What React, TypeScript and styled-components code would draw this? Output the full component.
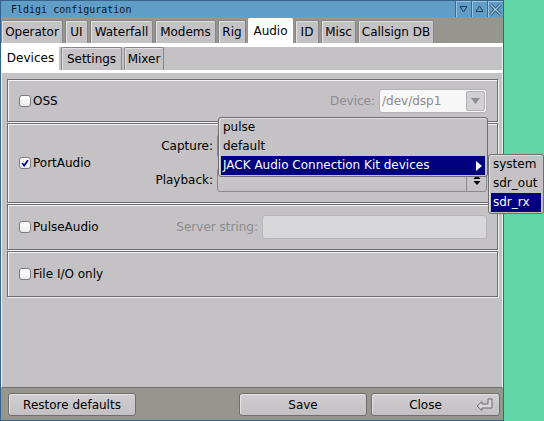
import styled, { createGlobalStyle } from "styled-components";

const GlobalStyle = createGlobalStyle`
  html, body {
    margin: 0;
    padding: 0;
  }
  body {
    background: #62d6a6;
    width: 544px;
    height: 421px;
    overflow: hidden;
    font-family: "DejaVu Sans", "Noto Sans", sans-serif;
    font-size: 12px;
    color: #000;
  }
`;

const Window = styled.div`
  position: relative;
  width: 504px;
  height: 421px;
  box-sizing: border-box;
  border: 1px solid #34648c;
  background: #96968f;
  display: flex;
  flex-direction: column;
`;

const TitleBar = styled.div`
  height: 16px;
  background: #609ec8;
  display: flex;
  align-items: center;
  padding-left: 10px;
  font-family: "DejaVu Sans Mono", monospace;
  font-size: 10px;
  color: #101820;
`;

const TitleText = styled.div`
  flex: 1;
`;

const TitleButton = styled.div`
  width: 15px;
  height: 16px;
  border-left: 1px solid #3a6a92;
  box-shadow: inset 1px 1px 0 #9cc3e1;
  display: flex;
  align-items: center;
  justify-content: center;
`;

const TabRow = styled.div`
  height: 26px;
  display: flex;
  align-items: flex-end;
  gap: 2px;
`;

const Tab = styled.div<{ $active?: boolean; $w: number; $h: number }>`
  width: ${(p) => p.$w}px;
  height: ${(p) => (p.$active ? p.$h + 2 : p.$h)}px;
  box-sizing: border-box;
  background: ${(p) => (p.$active ? "#ffffff" : "#c4c2c5")};
  border: 1px solid ${(p) => (p.$active ? "#ffffff" : "#86868a")};
  border-bottom: none;
  border-radius: 2px 2px 0 0;
  box-shadow: ${(p) => (p.$active ? "none" : "inset 1px 1px 0 #e2e0e3")};
  display: flex;
  align-items: center;
  justify-content: center;
  white-space: nowrap;
`;

const AudioFrame = styled.div`
  height: 345px;
  box-sizing: border-box;
  border-top: 4px solid #ffffff;
  border-left: 1px solid #f0f0f0;
  border-right: 1px solid #f0f0f0;
  border-bottom: 1px solid #707070;
  background: #c4c2c5;
  display: flex;
  flex-direction: column;
`;

const SubTabRow = styled.div`
  height: 23px;
  display: flex;
  align-items: flex-end;
  gap: 2px;
`;

const DevicesFrame = styled.div`
  flex: 1;
  border-top: 3px solid #ffffff;
  padding: 6px 4px 0 5px;
  display: flex;
  flex-direction: column;
`;

const Group = styled.div<{ $h: number }>`
  height: ${(p) => p.$h}px;
  box-sizing: border-box;
  border: 1px solid #6c6c6e;
  box-shadow: inset 1px 1px 0 #f4f4f4, 1px 1px 0 #f4f4f4;
  display: flex;
  align-items: center;
  padding: 0 10px 0 11px;
  margin-bottom: 1px;
`;

const CheckLabel = styled.label`
  display: flex;
  align-items: center;
  gap: 2px;
  white-space: nowrap;
`;

const Box = styled.span`
  width: 12px;
  height: 12px;
  box-sizing: border-box;
  border: 1px solid #7c7c80;
  border-radius: 3px;
  background: linear-gradient(#ffffff, #ececec);
  display: flex;
  align-items: center;
  justify-content: center;
`;

const FieldLabel = styled.span<{ $dim?: boolean }>`
  color: ${(p) => (p.$dim ? "#8c8b8e" : "#000")};
  margin-right: 4px;
  white-space: nowrap;
  text-align: right;
`;

const RightSide = styled.div`
  margin-left: auto;
  display: flex;
  align-items: center;
`;

const DeviceChoice = styled.div`
  width: 108px;
  height: 24px;
  box-sizing: border-box;
  border: 1px solid #b4b4b6;
  border-radius: 3px;
  background: #f7f7f7;
  display: flex;
  align-items: center;
  color: #8a898c;
  padding-left: 2px;
`;

const ChoiceText = styled.span`
  flex: 1;
`;

const ArrowButton = styled.div`
  width: 19px;
  height: 20px;
  margin-right: 1px;
  box-sizing: border-box;
  border: 1px solid #b0b0b2;
  border-radius: 2px;
  background: #d2d0d3;
  display: flex;
  align-items: center;
  justify-content: center;
`;

const ServerInput = styled.div`
  width: 225px;
  height: 24px;
  box-sizing: border-box;
  border: 1px solid #b6b6b8;
  border-radius: 3px;
  background: #d7d6d8;
`;

const PortGrid = styled.div`
  margin-left: auto;
  display: grid;
  grid-template-columns: auto 270px;
  grid-auto-rows: 24px;
  row-gap: 10px;
  align-items: center;
`;

const Choice = styled.div`
  height: 24px;
  box-sizing: border-box;
  border: 1px solid #8a8a8e;
  border-radius: 3px;
  background: linear-gradient(#cfcdd0, #c2c0c3);
  display: flex;
  justify-content: flex-end;
`;

const ChoiceSpin = styled.div`
  width: 19px;
  border-left: 1px solid #8a8a8e;
  display: flex;
  align-items: center;
  justify-content: center;
`;

const BottomBar = styled.div`
  flex: 1;
  display: flex;
  align-items: flex-start;
  padding: 5px 3px 0 7px;
  gap: 4px;
`;

const Button = styled.div<{ $w: number; $push?: boolean }>`
  width: ${(p) => p.$w}px;
  height: 23px;
  box-sizing: border-box;
  margin-left: ${(p) => (p.$push ? "auto" : "0")};
  border: 1px solid #6e6e70;
  border-radius: 3px;
  background: linear-gradient(#d0ced1, #c2c0c3);
  box-shadow: inset 1px 1px 0 #e4e2e5;
  display: flex;
  align-items: center;
  justify-content: center;
  position: relative;
`;

const ButtonLabel = styled.span<{ $iconGap?: number }>`
  margin-right: ${(p) => p.$iconGap ?? 0}px;
`;

const ButtonIcon = styled.span`
  position: absolute;
  right: 5px;
  top: 4px;
  display: flex;
`;

const Menu = styled.div<{ $x: number; $y: number; $w: number }>`
  position: absolute;
  left: ${(p) => p.$x}px;
  top: ${(p) => p.$y}px;
  width: ${(p) => p.$w}px;
  box-sizing: border-box;
  border: 1px solid #6e6e72;
  border-radius: 3px;
  background: #c4c2c5;
  padding: 0 2px 1px 2px;
  box-shadow: inset 1px 1px 0 #e0dee1;
`;

const MenuItem = styled.div<{ $sel?: boolean }>`
  height: 19px;
  line-height: 17px;
  padding-left: 2px;
  display: flex;
  align-items: center;
  justify-content: space-between;
  background: ${(p) => (p.$sel ? "#000080" : "transparent")};
  color: ${(p) => (p.$sel ? "#ffffff" : "#000")};
  white-space: nowrap;
`;

const SubArrow = styled.svg`
  margin-right: 2px;
`;

const Tick = () => (
  <svg width="8" height="8" viewBox="0 0 8 8">
    <path d="M1 4 L3.2 6.5 L7 1.2" fill="none" stroke="#000090" strokeWidth="1.8" />
  </svg>
);

const ReturnIcon = () => (
  <svg width="18" height="13" viewBox="0 0 18 13">
    <path
      d="M1 8 L6 3.5 L6 6 L12 6 L12 1 L16 1 L16 10 L6 10 L6 12.5 Z"
      fill="#d8d6d9"
      stroke="#6a6a6c"
      strokeWidth="1"
      strokeLinejoin="miter"
    />
  </svg>
);

const mainTabs = [
  { label: "Operator", w: 62 },
  { label: "UI", w: 23 },
  { label: "Waterfall", w: 63 },
  { label: "Modems", w: 61 },
  { label: "Rig", w: 28 },
  { label: "Audio", w: 45, active: true },
  { label: "ID", w: 24 },
  { label: "Misc", w: 35 },
  { label: "Callsign DB", w: 76 },
];

const subTabs = [
  { label: "Devices", w: 57, active: true },
  { label: "Settings", w: 61 },
  { label: "Mixer", w: 40 },
];

const App = () => {
  return (
    <>
      <GlobalStyle />
      <Window>
        <TitleBar>
          <TitleText>Fldigi configuration</TitleText>
          <TitleButton>
            <svg width="9" height="8" viewBox="0 0 9 8">
              <path d="M1 1.5 L8 1.5 L4.5 7 Z" fill="none" stroke="#1f3d5a" strokeWidth="1" />
            </svg>
          </TitleButton>
          <TitleButton>
            <svg width="9" height="8" viewBox="0 0 9 8">
              <path d="M1 6.5 L8 6.5 L4.5 1 Z" fill="none" stroke="#1f3d5a" strokeWidth="1" />
            </svg>
          </TitleButton>
          <TitleButton>
            <svg width="13" height="13" viewBox="0 0 13 13">
              <path d="M1.5 1.5 L11.5 11.5 M11.5 1.5 L1.5 11.5" stroke="#2a4c6c" strokeWidth="3" />
              <path d="M1.5 1.5 L11.5 11.5 M11.5 1.5 L1.5 11.5" stroke="#a9cde8" strokeWidth="1.2" />
            </svg>
          </TitleButton>
        </TitleBar>

        <TabRow>
          {mainTabs.map((t) => (
            <Tab key={t.label} $w={t.w} $h={23} $active={t.active}>
              {t.label}
            </Tab>
          ))}
        </TabRow>

        <AudioFrame>
          <SubTabRow>
            {subTabs.map((t) => (
              <Tab key={t.label} $w={t.w} $h={23} $active={t.active}>
                {t.label}
              </Tab>
            ))}
          </SubTabRow>

          <DevicesFrame>
            <Group $h={43}>
              <CheckLabel>
                <Box />
                OSS
              </CheckLabel>
              <RightSide>
                <FieldLabel $dim>Device:</FieldLabel>
                <DeviceChoice>
                  <ChoiceText>/dev/dsp1</ChoiceText>
                  <ArrowButton>
                    <svg width="9" height="6" viewBox="0 0 9 6">
                      <path d="M0 0 L9 0 L4.5 6 Z" fill="#8e8e90" />
                    </svg>
                  </ArrowButton>
                </DeviceChoice>
              </RightSide>
            </Group>

            <Group $h={80}>
              <CheckLabel>
                <Box>
                  <Tick />
                </Box>
                PortAudio
              </CheckLabel>
              <PortGrid>
                <FieldLabel>Capture:</FieldLabel>
                <Choice />
                <FieldLabel>Playback:</FieldLabel>
                <Choice>
                  <ChoiceSpin>
                    <svg width="8" height="12" viewBox="0 0 8 12">
                      <path d="M0.5 5 L7.5 5 L4 1 Z M0.5 7 L7.5 7 L4 11 Z" fill="#000" />
                    </svg>
                  </ChoiceSpin>
                </Choice>
              </PortGrid>
            </Group>

            <Group $h={46}>
              <CheckLabel>
                <Box />
                PulseAudio
              </CheckLabel>
              <RightSide>
                <FieldLabel $dim>Server string:</FieldLabel>
                <ServerInput />
              </RightSide>
            </Group>

            <Group $h={46}>
              <CheckLabel>
                <Box />
                File I/O only
              </CheckLabel>
            </Group>
          </DevicesFrame>
        </AudioFrame>

        <BottomBar>
          <Button $w={128}>Restore defaults</Button>
          <Button $w={128} $push>
            Save
          </Button>
          <Button $w={129}>
            <ButtonLabel $iconGap={20}>Close</ButtonLabel>
            <ButtonIcon>
              <ReturnIcon />
            </ButtonIcon>
          </Button>
        </BottomBar>

        <Menu $x={217} $y={116} $w={270}>
          <MenuItem>pulse</MenuItem>
          <MenuItem>default</MenuItem>
          <MenuItem $sel>
            JACK Audio Connection Kit devices
            <SubArrow width="7" height="10" viewBox="0 0 7 10">
              <path d="M0 0 L6 5 L0 10 Z" fill="#ffffff" />
            </SubArrow>
          </MenuItem>
        </Menu>

        <Menu $x={487} $y={153} $w={56}>
          <MenuItem>system</MenuItem>
          <MenuItem>sdr_out</MenuItem>
          <MenuItem $sel>sdr_rx</MenuItem>
        </Menu>
      </Window>
    </>
  );
};

export default App;
